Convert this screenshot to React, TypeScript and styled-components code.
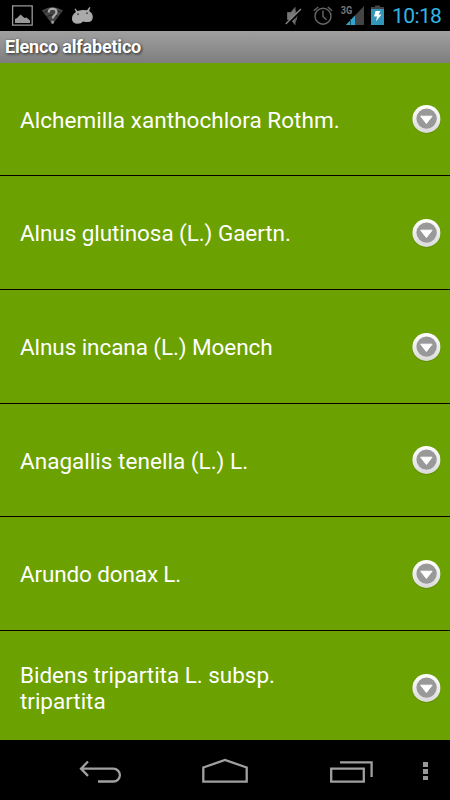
import React from 'react';
import styled, { createGlobalStyle } from 'styled-components';

const GlobalStyle = createGlobalStyle`
  * { box-sizing: border-box; }
  body { margin: 0; background: #000; font-family: Roboto, sans-serif; }
`;

const Screen = styled.div`
  width: 450px;
  height: 800px;
  display: flex;
  flex-direction: column;
  overflow: hidden;
  background: #000;
`;

const StatusBar = styled.header`
  flex: none;
  height: 31px;
  display: flex;
  justify-content: space-between;
  background: #000;
`;

const StatusGroup = styled.div`
  display: flex;
`;

const Glyph = styled.svg`
  display: block;
  flex: none;
`;

const Clock = styled.time`
  width: 60px;
  padding-left: 2px;
  font-size: 21px;
  line-height: 33px;
  letter-spacing: -0.6px;
  color: #33b5e5;
  white-space: nowrap;
`;

const TitleBar = styled.h1`
  flex: none;
  height: 32px;
  margin: 0;
  padding-left: 5px;
  background: linear-gradient(#a0a0a0, #7e7e7e);
  color: #fff;
  font-size: 18px;
  font-weight: 700;
  line-height: 31px;
  letter-spacing: -0.2px;
  text-shadow: 1px 1px 3px #222;
`;

const List = styled.ul`
  flex: 1;
  min-height: 0;
  margin: 0;
  padding: 0;
  overflow: hidden;
  list-style: none;
  background: #6ba100;
`;

const Row = styled.li<{ $height: number }>`
  height: ${({ $height }) => $height}px;
  display: flex;
  align-items: center;
  justify-content: space-between;
  padding: 0 9px 0 20px;
  border-bottom: 1px solid #000;
`;

const Name = styled.span<{ $tracking: number }>`
  width: 330px;
  padding-top: 1px;
  color: #fff;
  font-size: 22.5px;
  line-height: 26px;
  letter-spacing: ${({ $tracking }) => $tracking}px;
`;

const NavBar = styled.nav`
  flex: none;
  height: 60px;
  display: flex;
  background: #000;
`;

const plants = [
  { name: 'Alchemilla xanthochlora Rothm.', height: 113, tracking: 0.05 },
  { name: 'Alnus glutinosa (L.) Gaertn.', height: 114, tracking: -0.07 },
  { name: 'Alnus incana (L.) Moench', height: 114, tracking: -0.08 },
  { name: 'Anagallis tenella (L.) L.', height: 113, tracking: 0.03 },
  { name: 'Arundo donax L.', height: 114, tracking: -0.14 },
  { name: 'Bidens tripartita L. subsp. tripartita', height: 114, tracking: -0.03 },
];

const MoreIcon = () => (
  <Glyph width="30" height="30" viewBox="0 0 30 30">
    <defs>
      <linearGradient id="ring" x1="0" y1="0" x2="0" y2="1">
        <stop offset="0" stopColor="#fff" />
        <stop offset="1" stopColor="#dadada" />
      </linearGradient>
    </defs>
    <circle cx="15.4" cy="15.5" r="14.5" fill="#436500" opacity=".22" />
    <circle cx="15.4" cy="14.9" r="14" fill="url(#ring)" />
    <circle cx="15.6" cy="14.6" r="10.2" fill="#999" />
    <path d="M9.700 12.200h11.400l-5.700 7.300z" fill="#fff" stroke="#fff" strokeLinejoin="round" />
  </Glyph>
);

export default function App() {
  return (
    <>
      <GlobalStyle />
      <Screen>
        <StatusBar>
          <StatusGroup>
            <Glyph width="100" height="31" viewBox="0 0 100 31">
              <path d="M12.600 5.800h19.600v19.400H12.600z" fill="none" stroke="#999" strokeWidth="1.300" />
              <path d="M15 23v-4l2-1 3.500-3.500 4 3.500 2-.5 3.500 3V23z" fill="#999" />
              <path d="M41.800 10.500Q52.500 3.500 63 10.500L52.500 24.500z" fill="#444" />
              <path d="M43 13q9.500-6 19 0M46 17q6.500-4 13 0" fill="none" stroke="#222" />
              <path d="M48.800 12.500q-.2-3.700 3.700-3.700 4 0 4 3.200 0 2-2 3.300-1.700 1-1.700 3.200M52.600 20.700v2.800" fill="none" stroke="#aaa" strokeWidth="2.200" />
              <path d="M72 19.500Q71.500 14.500 76 12l-1.500-3 .8-.6 2.200 2.700q4.500-1.800 9.500-.9L89.500 7l.9.500-1.300 3.500Q93 13 92.800 17.500q-.5 4.500-4.800 4.500-3 0-5-.5-1.500 2.300-5.500 2.300Q72.500 23.500 72 19.500z" fill="#aaa" />
              <path d="M78 13.500v1.500M87 12.500v1.500" stroke="#222" strokeWidth="1.300" />
            </Glyph>
          </StatusGroup>
          <StatusGroup>
            <Glyph width="110" height="31" viewBox="280 0 110 31">
              <path d="M287.500 12.500h3.500l4-5v17l-4-5h-3.500zM295.500 10.500q3 5.500 0 11" fill="#777" stroke="#666" />
              <path d="M286.700 25L302 10" stroke="#000" strokeWidth="2" />
              <path d="M285.700 24L301 9" stroke="#888" strokeWidth="1.300" />
              <g fill="none" stroke="#666" strokeWidth="1.400">
                <circle cx="323" cy="16.200" r="8" />
                <path d="M323 10.500v6l3.500 3.200M313.800 10.800l4.400-3.800M332.200 10.800L327.800 7" />
              </g>
              <text x="340.800" y="14.200" fontSize="11" fontWeight="700" fill="#777" textLength="11.500" lengthAdjust="spacingAndGlyphs">3G</text>
              <path d="M346 25L364 6v19z" fill="#444" />
              <path d="M346 25l9-9.500V25z" fill="#33a5cc" />
              <path d="M350.500 19v6" stroke="#14576d" />
              <path d="M371 8V25h13V8z" fill="#3296b8" />
              <path d="M371 9V7h4V5.500h5V7h4v2z" fill="#444" />
              <path d="M375.500 11h5l-2 3.500h3l-5.500 7 1-5h-3z" fill="#fff" />
            </Glyph>
            <Clock>10:18</Clock>
          </StatusGroup>
        </StatusBar>
        <TitleBar>Elenco alfabetico</TitleBar>
        <List>
          {plants.map((plant) => (
            <Row key={plant.name} $height={plant.height}>
              <Name $tracking={plant.tracking}>{plant.name}</Name>
              <MoreIcon />
            </Row>
          ))}
        </List>
        <NavBar>
          <Glyph width="450" height="60" viewBox="0 0 450 60">
            <g fill="none" stroke="#a0a0a0" strokeWidth="2.300">
              <path d="M88 21.500l-7 7.200 7 7.200M81 28.700h32.500a6.400 6.400 0 0 1 0 12.800H98" />
              <path d="M203.300 27.500L225 20l21.700 7.500v14.200h-43.400z" />
              <path d="M331.200 28.600h32.600v13h-32.600zM340 22.400h31.600V37" />
            </g>
            <path d="M423 22h5v5h-5zM423 29h5v5h-5zM423 36h5v4h-5z" fill="#999" />
          </Glyph>
        </NavBar>
      </Screen>
    </>
  );
}
